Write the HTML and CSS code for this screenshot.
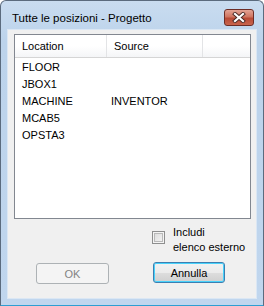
FILE: index.html
```html
<!DOCTYPE html>
<html lang="it">
<head>
    <meta charset="UTF-8">
    <title>Tutte le posizioni - Progetto</title>
    <link rel="stylesheet" href="styles.css">
</head>
<body>
    <div class="window">
        <div class="titlebar">
            <span class="title">Tutte le posizioni - Progetto</span>
            <div class="close">
                <svg width="14" height="11" viewBox="0 0 14 11">
                    <path d="M3 2 L11 9 M11 2 L3 9" stroke="#4a2a26" stroke-width="4" stroke-linecap="square"/>
                    <path d="M3 2 L11 9 M11 2 L3 9" stroke="#ffffff" stroke-width="2.2" stroke-linecap="square"/>
                </svg>
            </div>
        </div>
        <div class="client">
            <div class="list">
                <div class="list-head">
                    <div class="col col-loc">Location</div>
                    <div class="col col-src">Source</div>
                    <div class="col col-rest"></div>
                </div>
                <div class="row"><span class="cell-loc">FLOOR</span><span class="cell-src"></span></div>
                <div class="row"><span class="cell-loc">JBOX1</span><span class="cell-src"></span></div>
                <div class="row"><span class="cell-loc">MACHINE</span><span class="cell-src">INVENTOR</span></div>
                <div class="row"><span class="cell-loc">MCAB5</span><span class="cell-src"></span></div>
                <div class="row"><span class="cell-loc">OPSTA3</span><span class="cell-src"></span></div>
            </div>
            <div class="options">
                <span class="checkbox"></span>
                <label class="check-label">Includi<br>elenco esterno</label>
            </div>
            <div class="buttons">
                <button class="btn btn-ok" disabled>OK</button>
                <button class="btn btn-cancel">Annulla</button>
            </div>
        </div>
    </div>
</body>
</html>
```

FILE: styles.css
```css
body {
    margin: 0;
    font-family: "Liberation Sans", Arial, sans-serif;
    font-size: 11px;
    color: #000;
    background: #fff;
}
.window {
    width: 264px;
    height: 306px;
    box-sizing: border-box;
    border: 1px solid #5b6b7e;
    border-bottom-color: #2e9ed2;
    border-radius: 6px 6px 0 0;
    background: linear-gradient(#c9dcf0, #bcd3eb 40px, #c0d6ee);
    display: flex;
    flex-direction: column;
}
.titlebar {
    height: 29px;
    display: flex;
    justify-content: space-between;
    align-items: flex-start;
    padding: 0 9px 0 11px;
}
.title {
    font-size: 11.5px;
    margin-top: 11px;
    color: #000;
}
.close {
    margin-top: 8px;
    width: 30px;
    height: 17px;
    box-sizing: border-box;
    border: 1px solid #6d2d26;
    border-radius: 3px;
    background: linear-gradient(#e3a394, #cf7561 45%, #b84a36 55%, #c9654d);
    display: flex;
    align-items: center;
    justify-content: center;
}
.client {
    flex: 1;
    margin: 0 7px 7px 7px;
    background: #f0f0f0;
    box-shadow: 0 0 0 1px #dbe7f4;
}
.list {
    margin: 4px 0 0 6px;
    width: 237px;
    height: 185px;
    box-sizing: border-box;
    border: 1px solid #828790;
    background: #fff;
}
.list-head {
    display: flex;
    height: 22px;
    border-bottom: 1px solid #d5d5d5;
    background: linear-gradient(#ffffff, #ffffff 50%, #f4f5f7);
}
.col {
    line-height: 22px;
    box-sizing: border-box;
    padding-left: 7px;
}
.col-loc {
    width: 92px;
    border-right: 1px solid #e3e4e6;
}
.col-src {
    width: 96px;
    border-right: 1px solid #e3e4e6;
}
.col-rest {
    flex: 1;
}
.row {
    display: flex;
    height: 17px;
    line-height: 17px;
}
.list-head + .row {
    margin-top: 1px;
}
.cell-loc {
    width: 89px;
    padding-left: 7px;
}
.options {
    display: flex;
    align-items: flex-start;
    margin: 6px 0 0 144px;
}
.checkbox {
    width: 13px;
    height: 13px;
    box-sizing: border-box;
    margin-top: 6px;
    border: 1px solid #8e8f8f;
    background: linear-gradient(135deg, #d8d8d8, #f8f8f8);
    box-shadow: inset 0 0 0 1px #f4f4f4, inset 0 0 0 2px #b9b9b9;
}
.check-label {
    margin-left: 8px;
    line-height: 15px;
}
.buttons {
    display: flex;
    margin: 7px 0 0 28px;
}
.btn {
    height: 21px;
    box-sizing: border-box;
    font-family: "Liberation Sans", Arial, sans-serif;
    font-size: 11px;
    border-radius: 3px;
    padding: 0;
}
.btn-ok {
    width: 73px;
    margin-top: 1px;
    border: 1px solid #adb2b5;
    background: #f4f4f4;
    color: #838383;
}
.btn-cancel {
    width: 72px;
    margin-left: 44px;
    border: 1px solid #3c7fb1;
    background: linear-gradient(#f2f2f2, #ebebeb 50%, #dddddd 51%, #cfcfcf);
    box-shadow: inset 0 0 0 1px #48d2fb;
    color: #000;
}
```
